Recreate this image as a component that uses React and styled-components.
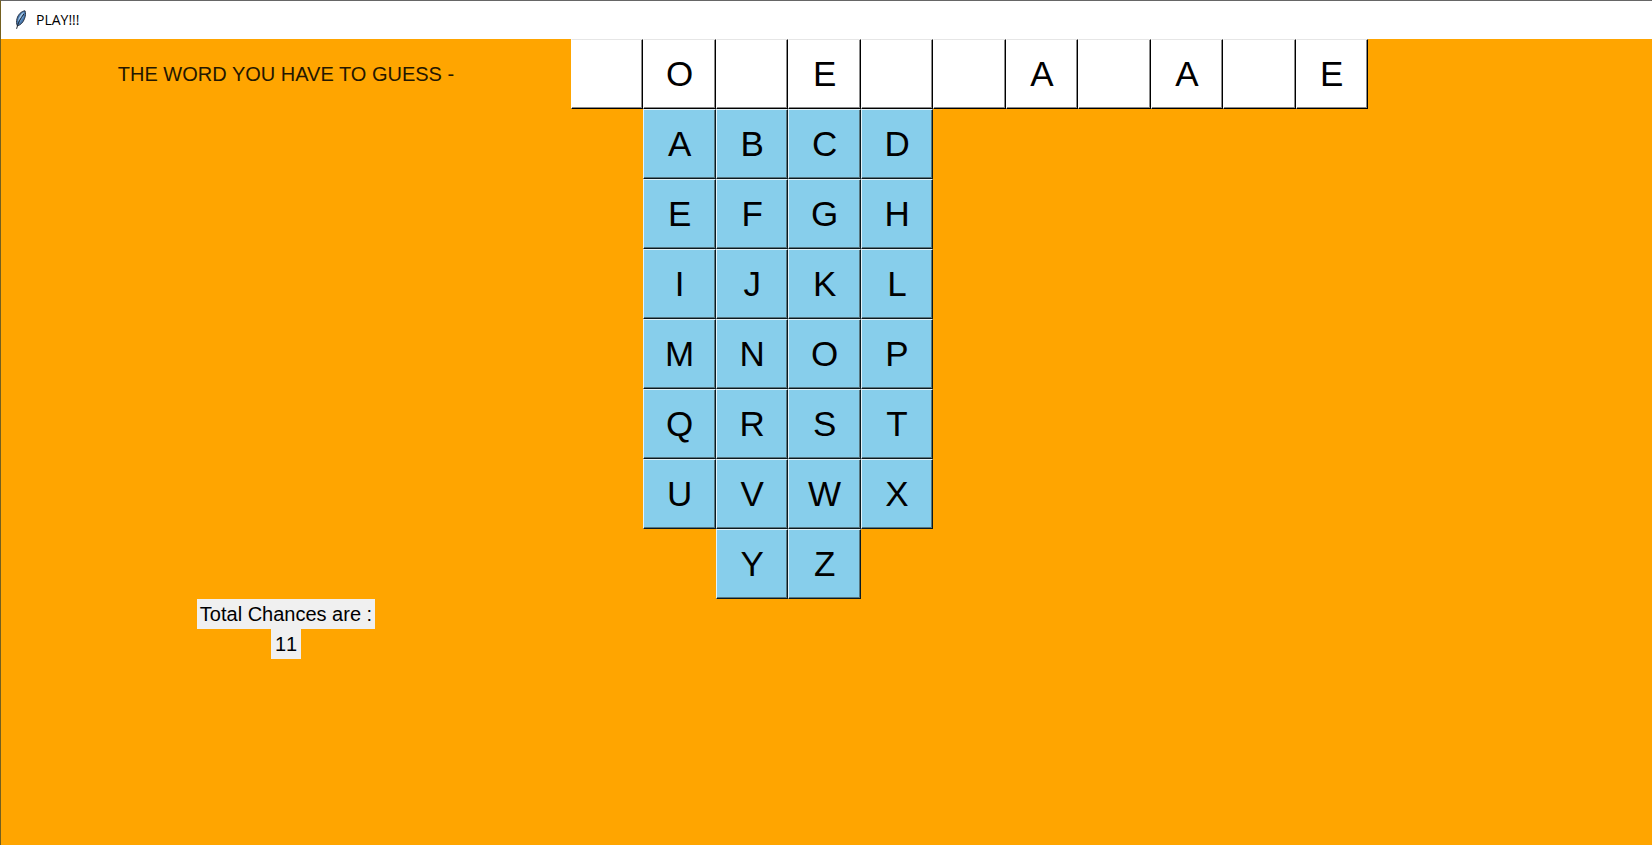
import React from 'react';
import styled, { createGlobalStyle } from 'styled-components';

const GlobalStyle = createGlobalStyle`
  * { box-sizing: border-box; }
  body {
    margin: 0;
    background: #ffa500;
    font-family: "Liberation Sans", Arial, sans-serif;
    color: #000;
  }
`;

const Window = styled.div`
  display: flex;
  flex-direction: column;
  min-height: 100vh;
  border-top: 1px solid #666;
  border-left: 1px solid #74601f;
  background: #ffa500;
`;

const TitleBar = styled.header`
  display: flex;
  align-items: center;
  gap: 7px;
  height: 38px;
  padding-left: 12px;
  background: #fff;
`;

const Title = styled.h1`
  margin: 0;
  font: 400 14px/20px "Open Sans", "Noto Sans", sans-serif;
`;

const Board = styled.main`
  display: grid;
  grid-template-columns: 570px 797px;
  grid-template-rows: 70px auto auto;
`;

const Prompt = styled.p`
  margin: 0;
  align-self: center;
  text-align: center;
  font-size: 20px;
  line-height: 30px;
  color: #241700;
`;

const TileGrid = styled.div`
  grid-column: 2;
  display: grid;
  grid-template-columns: repeat(11, 1fr);
  grid-auto-rows: 70px;
`;

const Tile = styled.button`
  min-width: 0;
  padding: 0;
  border: 1px solid;
  border-color: ${(p) => (p.$secret ? '#e6e6e6 #000 #000 #fff' : '#e4f4fa #0a1a20 #0a1a20 #e4f4fa')};
  border-radius: 0;
  box-shadow: inset -1px -1px ${(p) => (p.$secret ? '#8a8a8a' : '#56767f')};
  background: ${(p) => (p.$secret ? '#fff' : '#87ceeb')};
  color: #000;
  font: 400 35px/40px "Liberation Sans", Arial, sans-serif;
  grid-column-start: ${(p) => p.$column || 'auto'};
`;

const Chances = styled.div`
  display: flex;
  flex-direction: column;
  align-items: center;
`;

const ChanceLabel = styled.span`
  padding: 0 3px;
  background: #f0f0f0;
  font-size: 20px;
  line-height: 30px;
`;

const ChanceCount = styled(ChanceLabel)`
  padding: 0 4px;
  font-kerning: none;
`;

const FeatherIcon = () => (
  <svg width="16" height="20" viewBox="0 0 16 20" aria-hidden="true">
    <path d="M12 .8C8.4 1.2 5.2 4.4 4 8.6c-.7 2.6-.6 5 .3 7.2 3.2-.6 6-3.4 7.4-7.6.9-2.7 1.2-5.2.3-7.4Z" fill="#4878ad" stroke="#2b3546" strokeWidth="1" />
    <path d="M11 2C7.8 3.6 5.6 7 4.9 11.6L8.8 7Z" fill="#a8c9e6" />
    <path d="m9.6 5 1.4 1.6-4.6 6.6-.6-1.8Z" fill="#6b9bcb" />
    <path d="M10.8 4C7.6 8.6 5 12.4 3.6 18.8" fill="none" stroke="#1d2530" strokeWidth="1" />
  </svg>
);

const WORD = [' ', 'O', ' ', 'E', ' ', ' ', 'A', ' ', 'A', ' ', 'E'];
const LETTERS = 'ABCDEFGHIJKLMNOPQRSTUVWXYZ'.split('');

// Four keys per row, starting in the second column; the last two sit centred.
const keyColumn = (i) => (i < 24 ? (i % 4) + 2 : i - 24 + 3);

export default function App() {
  return (
    <>
      <GlobalStyle />
      <Window>
        <TitleBar>
          <FeatherIcon />
          <Title>PLAY!!!</Title>
        </TitleBar>
        <Board>
          <Prompt>THE WORD YOU HAVE TO GUESS -</Prompt>
          <TileGrid>
            {WORD.map((letter, i) => (
              <Tile
                key={i}
                type="button"
                $secret
                aria-label={letter === ' ' ? 'Hidden letter' : undefined}
              >
                {letter}
              </Tile>
            ))}
          </TileGrid>
          <TileGrid>
            {LETTERS.map((letter, i) => (
              <Tile key={letter} type="button" $column={keyColumn(i)}>{letter}</Tile>
            ))}
          </TileGrid>
          <Chances>
            <ChanceLabel>Total Chances are :</ChanceLabel>
            <ChanceCount>11</ChanceCount>
          </Chances>
        </Board>
      </Window>
    </>
  );
}
